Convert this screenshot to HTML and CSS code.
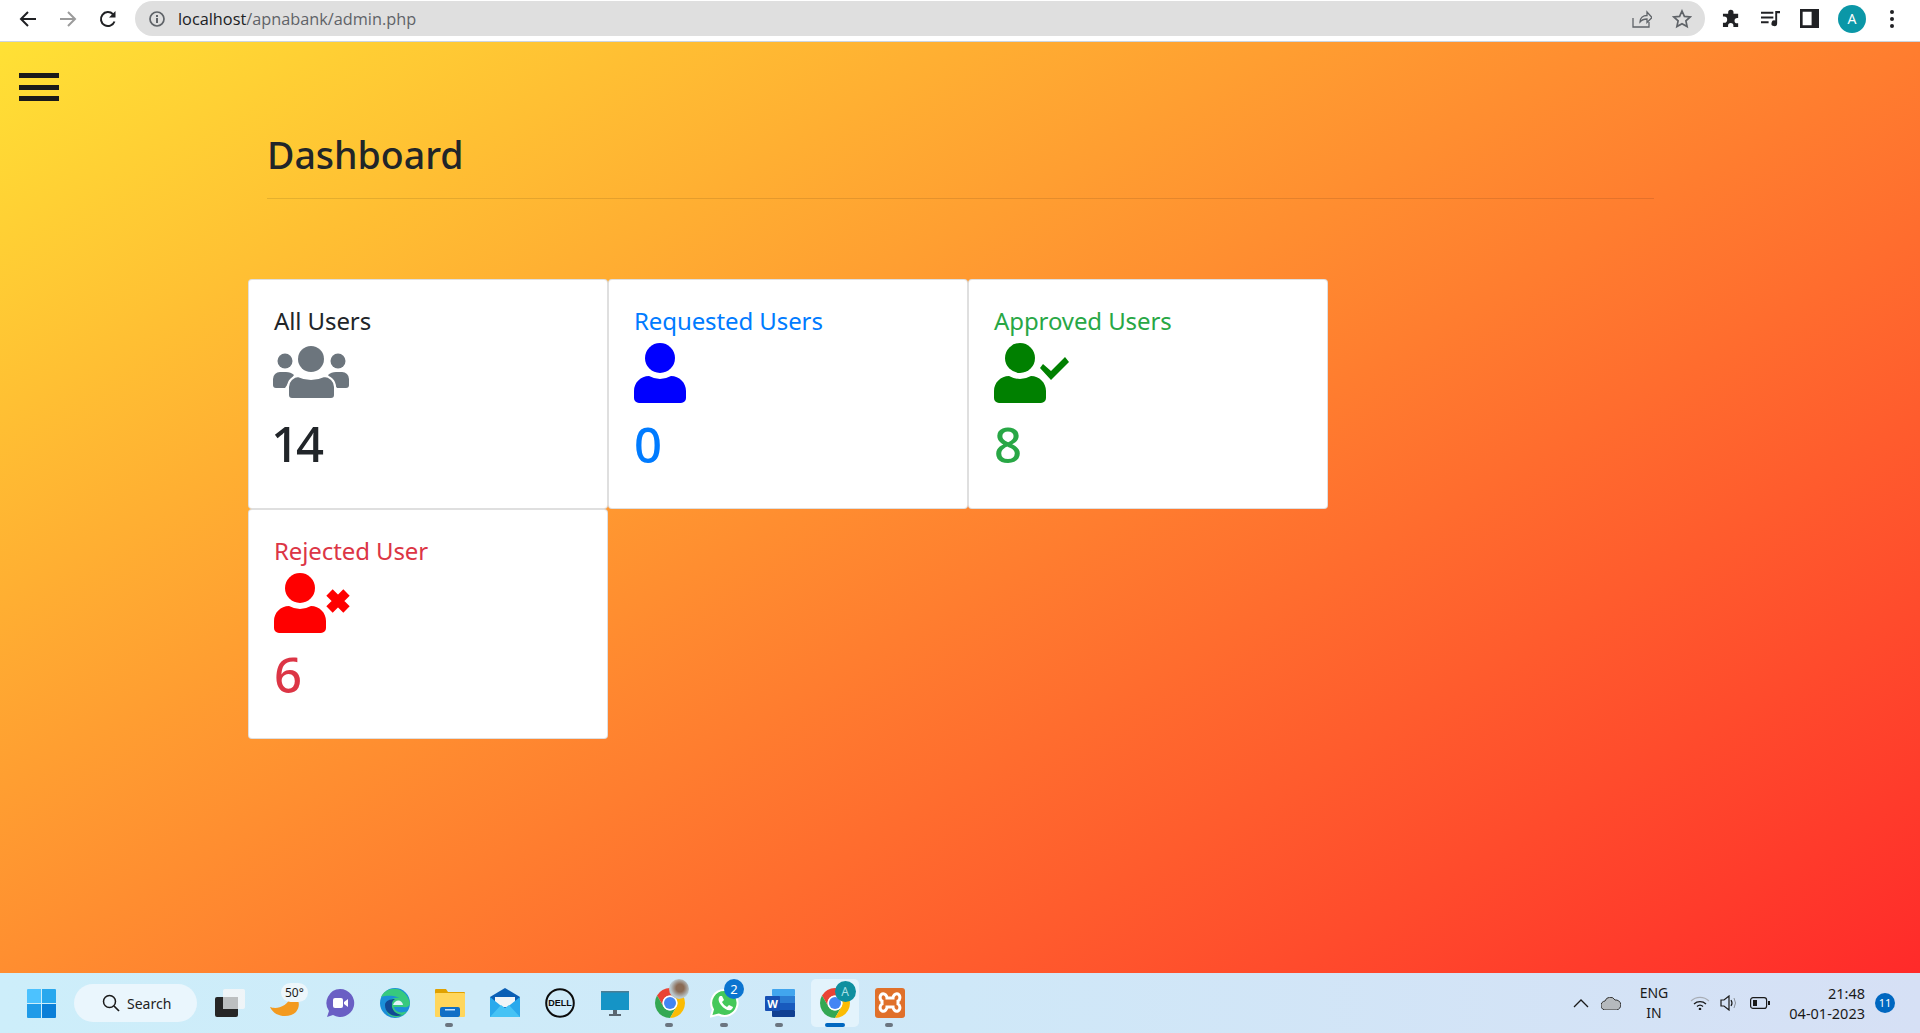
FILE: index.html
```html
<!DOCTYPE html>
<html lang="en">
<head>
    <meta charset="UTF-8">
    <title>Dashboard</title>
    <link rel="stylesheet" href="styles.css">
</head>
<body>
<svg class="defs" width="0" height="0">
    <symbol id="chrome" viewBox="4 4 40 40">
        <path fill="#ea4335" d="M41.32 14H24A10 10 0 0 0 15.34 29L6.68 14A20 20 0 0 1 41.32 14Z"/>
        <path fill="#34a853" d="M6.68 14L15.34 29A10 10 0 0 0 32.66 29L24 44A20 20 0 0 1 6.68 14Z"/>
        <path fill="#fbbc04" d="M24 44L32.66 29A10 10 0 0 0 24 14H41.32A20 20 0 0 1 24 44Z"/>
        <circle cx="24" cy="24" r="10" fill="#fff"/>
        <circle cx="24" cy="24" r="8" fill="#4285f4"/>
    </symbol>
    <symbol id="person" viewBox="0 0 52 60">
        <circle cx="26" cy="15" r="15"/>
        <path d="M15 33q5.500 3 11 3t11-3c8.300 0 15 6.700 15 15v7a5 5 0 0 1-5 5H5a5 5 0 0 1-5-5v-7C0 39.700 6.700 33 15 33Z"/>
    </symbol>
</svg>

<header class="toolbar">
    <div class="nav-btns">
        <svg class="tool-ico" viewBox="0 0 18 18"><path d="M17 9H2M9 2L2 9l7 7" fill="none" stroke="#202124" stroke-width="2"/></svg>
        <svg class="tool-ico" viewBox="0 0 18 18"><path d="M1 9h15M9 2l7 7-7 7" fill="none" stroke="#9b9b9b" stroke-width="2"/></svg>
        <svg class="tool-ico" viewBox="0 0 18 18"><path d="M15.500 11.500A7 7 0 1 1 14 4.200" fill="none" stroke="#202124" stroke-width="2"/><path d="M16.500 1v6.500H10z" fill="#202124"/></svg>
    </div>
    <div class="omnibox">
        <svg class="info-ico" viewBox="0 0 16 16"><circle cx="8" cy="8" r="7" fill="none" stroke="#5f6368" stroke-width="1.700"/><path d="M7 7h2v5H7zM7 4h2v2H7z" fill="#5f6368"/></svg>
        <span class="url"><span class="url-host">localhost</span>/apnabank/admin.php</span>
        <svg class="omni-ico" viewBox="0 0 20 18"><path d="M1 8v9h16v-5M8 12c0-4 3-6.500 7-6.500V2l5 5.500-5 5V9c-3 0-5 .5-7 3Z" fill="none" stroke="#5f6368" stroke-width="1.300"/></svg>
        <svg class="omni-ico omni-star" viewBox="0 0 20 20"><path d="M10 2l2.400 5.400 5.800.6-4.300 3.900 1.200 5.700L10 14.700l-5.100 2.900 1.200-5.700L1.800 8l5.800-.6Z" fill="none" stroke="#5f6368" stroke-width="1.700"/></svg>
    </div>
    <div class="tool-right">
        <svg class="ext-ico" viewBox="0 0 20 20"><path d="M1 8V5h5.500V3.500a2.800 2.800 0 0 1 5.600 0V5H17v4.500h-1a2.800 2.800 0 0 0 0 5.600h1V19h-5v-1.500a2.800 2.800 0 0 0-5.600 0V19H1v-4.500h1.200a3 3 0 0 0 0-6.500Z" fill="#202124"/></svg>
        <svg class="ext-ico" viewBox="0 0 20 20"><path d="M0 3h13v2H0zM0 8h13v2H0zM0 13h8v2H0zM15 2h5v2.500h-3V15a3 3 0 1 1-2-2.800Z" fill="#202124"/></svg>
        <svg class="ext-ico" viewBox="0 0 18 18"><path d="M0 0h18v18H0zM2.500 2.500v13H11v-13Z" fill="#202124" fill-rule="evenodd"/></svg>
        <span class="avatar">A</span>
        <span class="dots"><i></i><i></i><i></i></span>
    </div>
</header>

<main class="page">
    <div class="burger"><i></i><i></i><i></i></div>
    <div class="head">
        <h1>Dashboard</h1>
        <hr>
    </div>
    <div class="cards">
        <div class="card">
            <h4>All Users</h4>
            <svg class="ico-users" viewBox="0 0 76 53">
                <g fill="#6c757d">
                    <circle cx="38" cy="13" r="13"/>
                    <circle cx="12" cy="15" r="7.500"/>
                    <circle cx="65" cy="15" r="7.500"/>
                    <path d="M7 26h6c3 0 6 1 8 3L12 42H3a3 3 0 0 1-3-3v-6a7 7 0 0 1 7-7Z"/>
                    <path d="M69 26h-6c-3 0-6 1-8 3l9 13h9a3 3 0 0 0 3-3v-6a7 7 0 0 0-7-7Z"/>
                    <path d="M25 30q6.500 3 13 3t13-3c6 0 11 5 11 11v8a4 4 0 0 1-4 4H19a4 4 0 0 1-4-4v-8c0-6 5-11 11-11Z" stroke="#fff" stroke-width="2"/>
                </g>
            </svg>
            <div class="num num-tight">14</div>
        </div>
        <div class="card c-blue">
            <h4>Requested Users</h4>
            <svg class="ico-user" viewBox="0 0 76 60" fill="#00f"><use href="#person" width="52" height="60"/></svg>
            <div class="num">0</div>
        </div>
        <div class="card c-green">
            <h4>Approved Users</h4>
            <svg class="ico-user" viewBox="0 0 76 60" fill="#008000">
                <use href="#person" width="52" height="60"/>
                <path d="M46 25l3-4 8 7 14-14 4 5-18 18Z"/>
            </svg>
            <div class="num">8</div>
        </div>
        <div class="card c-red">
            <h4>Rejected User</h4>
            <svg class="ico-user" viewBox="0 0 76 60" fill="#f00">
                <use href="#person" width="52" height="60"/>
                <path d="M55.500 19.500l17 17M72.500 19.500l-17 17" fill="none" stroke="#f00" stroke-width="9"/>
            </svg>
            <div class="num">6</div>
        </div>
    </div>
</main>

<footer class="taskbar">
    <svg class="win-logo" viewBox="0 0 29 29">
        <path fill="#4cc2ff" d="M0 1a1 1 0 0 1 1-1h13v14H0z"/>
        <path fill="#28a8ee" d="M15 0h13a1 1 0 0 1 1 1v13H15z"/>
        <path fill="#1f9be8" d="M0 15h14v14H1a1 1 0 0 1-1-1z"/>
        <path fill="#0a7fd8" d="M15 15h14v13a1 1 0 0 1-1 1H15z"/>
    </svg>
    <div class="search">
        <svg class="search-ico" viewBox="0 0 18 18"><circle cx="7.500" cy="7.500" r="6" fill="none" stroke="#1a1a1a" stroke-width="1.500"/><path d="M12 12l5 5" stroke="#1a1a1a" stroke-width="1.700"/></svg>
        <span>Search</span>
    </div>
    <div class="tb-item">
        <svg class="tb-ico" viewBox="0 0 30 30"><rect x="0" y="9" width="23" height="20" rx="2" fill="#262626"/><rect x="8" y="1" width="22" height="20" rx="2" fill="#f4f6f7" opacity=".85"/><rect x="8" y="9" width="15" height="12" fill="#bcbfc0"/></svg>
    </div>
    <div class="tb-item">
        <svg class="tb-ico" viewBox="0 0 30 30"><path d="M0 19c5 2 17 2 23-14 6 5 8 13 3 19-6 6-21 6-26-5Z" fill="#f39a1f"/></svg>
        <span class="temp">50°</span>
    </div>
    <div class="tb-item">
        <svg class="tb-ico" viewBox="0 0 30 30"><path d="M15 1a14 14 0 1 1-7 26l-6 2 2-6A14 14 0 0 1 15 1Z" fill="#6a5fc4"/><rect x="8" y="10" width="10" height="10" rx="2" fill="#fff"/><path d="M19 14l4-3v8l-4-3z" fill="#fff"/></svg>
    </div>
    <div class="tb-item">
        <svg class="tb-ico" viewBox="0 0 30 30"><circle cx="15" cy="15" r="15" fill="#1a8fd8"/><path d="M1 9C6-3 26-3 30 15c0 3-3 5-7 4H14c1 5 7 7 13 4-5 8-17 8-20 1C4 18 8 11 15 10c4-1 6 0 8 3-4-6-16-6-22-4Z" fill="#37c97e"/><path d="M13 17h10c-1-6-8-6-10 0Z" fill="#dff3fb"/><path d="M5 17c0 9 9 13 17 10-6-1-11-5-10-11 0-2 1-4 3-5-5 0-10 2-10 6Z" fill="#114a94"/></svg>
    </div>
    <div class="tb-item has-dot">
        <svg class="tb-ico" viewBox="0 0 30 30"><path d="M0 2a1 1 0 0 1 1-1h10l2 3h16a1 1 0 0 1 1 1v3H0Z" fill="#e0a100"/><rect y="5" width="30" height="24" rx="1" fill="#ffd65c"/><rect x="5" y="19" width="20" height="10" rx="2" fill="#0f6fc6"/><rect x="10" y="21" width="10" height="1.500" fill="#bfe0ff"/></svg>
    </div>
    <div class="tb-item">
        <svg class="tb-ico" viewBox="0 0 30 30"><path d="M0 9l15-9 15 9v19H0z" fill="#0b5fb5"/><path d="M5 9h20v10H5z" fill="#f2f5f7"/><path d="M0 9l15 12L30 9v20H0z" fill="#29a9ec"/><path d="M0 29l11-12 4 3 4-3 11 12z" fill="#45c3f5"/></svg>
    </div>
    <div class="tb-item">
        <svg class="tb-ico" viewBox="0 0 30 30"><circle cx="15" cy="15" r="13.800" fill="none" stroke="#0c0c0c" stroke-width="2"/><text class="dell" x="15" y="18" text-anchor="middle">DELL</text></svg>
    </div>
    <div class="tb-item">
        <svg class="tb-ico" viewBox="0 0 30 30"><rect x="1" y="3" width="28" height="19" fill="#1594c6"/><rect x="1" y="3" width="28" height="1.500" fill="#4a7d93"/><rect x="13" y="22" width="4" height="4" fill="#5a6670"/><rect x="9" y="26" width="12" height="2" fill="#5a6670"/></svg>
    </div>
    <div class="tb-item has-dot">
        <svg class="tb-ico"><use href="#chrome"/></svg>
        <span class="badge-photo"></span>
    </div>
    <div class="tb-item has-dot">
        <svg class="tb-ico" viewBox="0 0 30 30"><path d="M15 2a13 13 0 1 1-6.500 24.500L1 28.500l2-7A13 13 0 0 1 15 2Z" fill="#45c85a" stroke="#fff" stroke-width="2"/><path d="M10 8c-2 2-2 5 1 9s7 6 10 5c1-1 2-2 2-3l-4-2-2 2c-2-1-4-3-5-5l2-2-2-4Z" fill="#fff"/></svg>
        <span class="badge-num">2</span>
    </div>
    <div class="tb-item has-dot">
        <svg class="tb-ico" viewBox="0 0 30 30"><rect x="7" y="1" width="23" height="7" rx="1" fill="#41a5ee"/><rect x="7" y="8" width="23" height="7" fill="#2b7cd3"/><rect x="7" y="15" width="23" height="7" fill="#185abd"/><rect x="7" y="22" width="23" height="7" rx="1" fill="#103f91"/><rect x="0" y="8" width="15" height="15" rx="1" fill="#1750b4"/><text class="word-w" x="7.500" y="19.500" text-anchor="middle">W</text></svg>
    </div>
    <div class="tb-item active">
        <svg class="tb-ico"><use href="#chrome"/></svg>
        <span class="badge-a">A</span>
    </div>
    <div class="tb-item has-dot">
        <svg class="tb-ico" viewBox="0 0 30 30"><rect width="30" height="30" rx="3" fill="#e0702a"/><path d="M7 6c3-1 5 2 5 4h6c0-2 2-5 5-4 3 2 2 6 0 7v3c2 1 3 5 0 7-3 1-5-2-5-4h-6c0 2-2 5-5 4-3-2-2-6 0-7v-3c-2-1-3-5 0-7Z" fill="none" stroke="#fff" stroke-width="3"/></svg>
    </div>

    <div class="tray">
        <svg class="tray-chev" viewBox="0 0 16 10"><path d="M1 9l7-7 7 7" fill="none" stroke="#1a1a1a" stroke-width="1.300"/></svg>
        <svg class="tray-cloud" viewBox="0 0 20 13"><path d="M5 13a4.500 4.500 0 0 1-1-9 5.500 5.500 0 0 1 10-1 5 5 0 0 1 1.500 10Z" fill="#b5b9bd" stroke="#333" stroke-width="1"/></svg>
        <div class="lang">ENG<br>IN</div>
        <svg class="tray-wifi" viewBox="0 0 20 14"><path d="M1 5a13 13 0 0 1 18 0" fill="none" stroke="#a8adb5" stroke-width="1.200"/><path d="M4 8a9 9 0 0 1 12 0M7 10.500a4.500 4.500 0 0 1 6 0" fill="none" stroke="#1a1a1a" stroke-width="1.300"/><circle cx="10" cy="13" r="1.300" fill="#1a1a1a"/></svg>
        <svg class="tray-vol" viewBox="0 0 19 16"><path d="M1 5h3l5-4v14l-5-4H1Z" fill="none" stroke="#1a1a1a" stroke-width="1.200"/><path d="M11 5q2 3 0 6" fill="none" stroke="#1a1a1a" stroke-width="1.200"/><path d="M14 3q3 5 0 10" fill="none" stroke="#8a9099" stroke-width="1"/></svg>
        <svg class="tray-bat" viewBox="0 0 20 12"><rect x=".6" y=".6" width="16" height="10.800" rx="2.500" fill="none" stroke="#1a1a1a" stroke-width="1.200"/><rect x="3" y="3" width="4" height="6" fill="#1a1a1a"/><rect x="18" y="4" width="2" height="4" fill="#1a1a1a"/></svg>
        <div class="clock">21:48<br>04-01-2023</div>
        <span class="notif">11</span>
    </div>
</footer>
</body>
</html>
```
FILE: styles.css
```css
*{
    margin: 0;
    padding: 0;
    box-sizing: border-box;
}
html, body{
    height: 100%;
    overflow: hidden;
}
body{
    display: flex;
    flex-direction: column;
    font-family: "Noto Sans", "Open Sans", sans-serif;
    color: #212529;
}
.defs{
    position: absolute;
}

/* browser bar */
.toolbar{
    height: 42px;
    flex: none;
    display: flex;
    background: #fff;
    border-bottom: 1px solid #ccd5e0;
    padding-top: 1px;
}
.nav-btns{
    width: 135px;
    height: 35px;
    display: flex;
    align-items: center;
    gap: 22px;
    padding-left: 19px;
}
.tool-ico{
    width: 18px;
    height: 18px;
}
.omnibox{
    width: 1570px;
    height: 35px;
    background: #dfdfdf;
    border-radius: 18px;
    display: flex;
    align-items: center;
    padding-left: 14px;
    padding-right: 13px;
}
.info-ico{
    width: 16px;
    height: 16px;
    margin-right: 13px;
}
.url{
    font-family: "Open Sans", sans-serif;
    font-size: 16.300px;
    color: #5f6368;
    flex: 1;
}
.url-host{
    color: #202124;
}
.omni-ico{
    width: 20px;
    height: 18px;
}
.omni-star{
    margin-left: 20px;
    height: 20px;
}
.tool-right{
    flex: 1;
    height: 35px;
    display: flex;
    align-items: center;
    padding-left: 17px;
    gap: 20px;
}
.ext-ico{
    width: 19px;
    height: 19px;
}
.avatar{
    width: 28px;
    height: 28px;
    border-radius: 50%;
    background: #0b97a7;
    color: #fff;
    font-size: 14px;
    line-height: 28px;
    text-align: center;
    margin-left: -1px;
}
.dots{
    display: flex;
    flex-direction: column;
    gap: 3px;
    margin-left: 4px;
}
.dots i{
    width: 4px;
    height: 4px;
    border-radius: 50%;
    background: #202124;
}

/* page */
.page{
    flex: 1;
    min-height: 0;
    background: linear-gradient(150deg, #ffe135, #ff2a2a);
}
.burger{
    margin: 31px 0 0 19px;
    width: 40px;
    height: 28px;
    display: flex;
    flex-direction: column;
    justify-content: space-between;
}
.burger i{
    height: 5px;
    background: #1a1a1a;
}
.head{
    margin: 28px 266px 0 267px;
}
.head h1{
    font-size: 37.500px;
    font-weight: 500;
    line-height: 51px;
    height: 69px;
}
.head hr{
    border: 0;
    border-top: 1px solid rgba(0,0,0,.1);
}
.cards{
    margin: 80px 0 0 248px;
    width: 1080px;
    display: flex;
    flex-wrap: wrap;
}
.card{
    width: 360px;
    height: 230px;
    background: #fff;
    border: 1px solid rgba(0,0,0,.125);
    border-radius: 4px;
    padding: 25px 25px 0;
}
.card h4{
    font-size: 24px;
    font-weight: 400;
    letter-spacing: -.1px;
    line-height: 32px;
    height: 32px;
}
.ico-users{
    display: block;
    width: 76px;
    height: 53px;
    margin: 9px 0 0 -1px;
}
.ico-user{
    display: block;
    width: 76px;
    height: 60px;
    margin-top: 6px;
}
.num{
    font-size: 49px;
    font-weight: 500;
    line-height: 56px;
    margin-top: 13px;
}
.ico-users + .num{
    margin-top: 16px;
}
.num-tight{
    letter-spacing: -3px;
    margin-left: -3px;
}
.c-blue{
    color: #007bff;
}
.c-green{
    color: #28a745;
}
.c-red{
    color: #dc3545;
}

/* windows taskbar */
.taskbar{
    height: 60px;
    flex: none;
    display: flex;
    align-items: center;
    padding-left: 27px;
    background: linear-gradient(to right, #cdeefa, #cfe8f8 50%, #d6e0f5);
}
.win-logo{
    width: 29px;
    height: 29px;
    flex: none;
}
.search{
    width: 123px;
    height: 38px;
    margin: 0 5px 0 18px;
    background: #eaf6fd;
    border-radius: 19px;
    display: flex;
    align-items: center;
    padding-left: 28px;
    gap: 7px;
    font-size: 14px;
    color: #222;
}
.search-ico{
    width: 18px;
    height: 18px;
}
.tb-item{
    width: 55px;
    height: 48px;
    flex: none;
    display: flex;
    align-items: center;
    justify-content: center;
    position: relative;
}
.tb-ico{
    width: 30px;
    height: 30px;
}
.has-dot::after{
    content: "";
    position: absolute;
    left: 23px;
    bottom: 0;
    width: 8px;
    height: 4px;
    border-radius: 2px;
    background: #6b7580;
}
.active{
    background: #e3f3fc;
    border-radius: 5px;
    width: 48px;
    margin: 0 3.500px;
}
.active::after{
    content: "";
    position: absolute;
    left: 14px;
    bottom: 0;
    width: 20px;
    height: 4px;
    border-radius: 2px;
    background: #0067c0;
}
.temp{
    position: absolute;
    top: 4px;
    left: 24px;
    height: 19px;
    padding: 0 4px;
    border-radius: 10px;
    background: #edf6fb;
    font-size: 12px;
    line-height: 19px;
    color: #1a1a1a;
}
.dell{
    font-family: "Liberation Sans", sans-serif;
    font-size: 9px;
    font-weight: 700;
    fill: #0c0c0c;
}
.word-w{
    font-family: "Noto Sans", sans-serif;
    font-size: 11px;
    font-weight: 700;
    fill: #fff;
}
.badge-photo{
    position: absolute;
    top: 0;
    right: 8px;
    width: 20px;
    height: 20px;
    border-radius: 50%;
    background: radial-gradient(circle at 55% 45%, #8a6b55 25%, #b9c6cb 60%);
}
.badge-num{
    position: absolute;
    top: 0;
    right: 8px;
    width: 20px;
    height: 20px;
    border-radius: 50%;
    background: #0b74d0;
    color: #fff;
    font-size: 13px;
    line-height: 20px;
    text-align: center;
}
.badge-a{
    position: absolute;
    top: 2px;
    right: 3px;
    width: 21px;
    height: 21px;
    border-radius: 50%;
    background: #0f8f9f;
    color: #a9e0e6;
    font-size: 12px;
    line-height: 21px;
    text-align: center;
}
.tray{
    margin-left: auto;
    display: flex;
    align-items: center;
    padding-right: 25px;
    color: #1a1a1a;
}
.tray-chev{
    width: 16px;
    height: 10px;
}
.tray-cloud{
    width: 20px;
    height: 13px;
    margin-left: 12px;
}
.lang{
    width: 40px;
    margin: 0 16px 0 13px;
    font-size: 14px;
    line-height: 20px;
    text-align: center;
}
.tray-wifi{
    width: 20px;
    height: 14px;
}
.tray-vol{
    width: 19px;
    height: 16px;
    margin-left: 10px;
}
.tray-bat{
    width: 20px;
    height: 12px;
    margin-left: 11px;
}
.clock{
    width: 95px;
    font-size: 14.500px;
    line-height: 20px;
    text-align: right;
}
.notif{
    width: 20px;
    height: 20px;
    margin-left: 10px;
    border-radius: 50%;
    background: #0067c0;
    color: #fff;
    font-size: 11px;
    line-height: 20px;
    text-align: center;
}
```
